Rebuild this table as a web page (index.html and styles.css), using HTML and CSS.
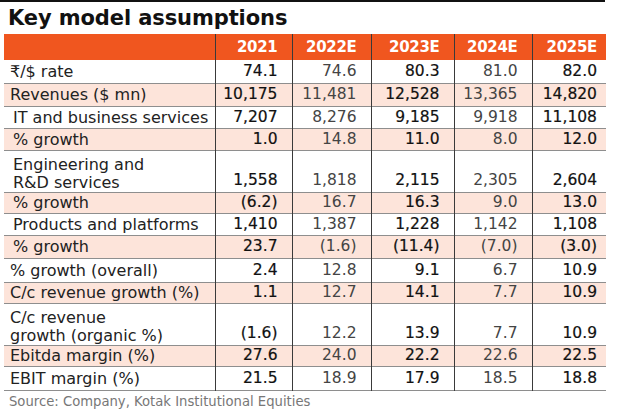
FILE: index.html
```html
<!DOCTYPE html>
<html lang="en">
<head>
<meta charset="utf-8">
<title>Key model assumptions</title>
<link rel="stylesheet" href="styles.css">
</head>
<body>
<div class="page">
  <div class="topline"></div>
  <h1 class="title">Key model assumptions</h1>
  <table class="tbl">
    <colgroup>
      <col class="c-label"><col class="c-2021"><col class="c-2022"><col class="c-2023"><col class="c-2024"><col class="c-2025">
    </colgroup>
    <thead>
      <tr class="head">
        <th class="label"></th><th>2021</th><th>2022E</th><th>2023E</th><th>2024E</th><th class="last">2025E</th>
      </tr>
    </thead>
    <tbody>
      <tr class="r23"><td class="label">₹/$ rate</td><td class="b">74.1</td><td>74.6</td><td class="b">80.3</td><td>81.0</td><td class="b last">82.0</td></tr>
      <tr class="r23"><td class="label">Revenues ($ mn)</td><td class="b">10,175</td><td>11,481</td><td class="b">12,528</td><td>13,365</td><td class="b last">14,820</td></tr>
      <tr class="r22"><td class="label sub">IT and business services</td><td class="b">7,207</td><td>8,276</td><td class="b">9,185</td><td>9,918</td><td class="b last">11,108</td></tr>
      <tr class="r22"><td class="label sub">% growth</td><td class="b">1.0</td><td>14.8</td><td class="b">11.0</td><td>8.0</td><td class="b last">12.0</td></tr>
      <tr class="r42"><td class="label sub">Engineering and<br>R&amp;D services</td><td class="b">1,558</td><td>1,818</td><td class="b">2,115</td><td>2,305</td><td class="b last">2,604</td></tr>
      <tr class="r21"><td class="label sub">% growth</td><td class="b">(6.2)</td><td>16.7</td><td class="b">16.3</td><td>9.0</td><td class="b last">13.0</td></tr>
      <tr class="r22"><td class="label sub">Products and platforms</td><td class="b">1,410</td><td>1,387</td><td class="b">1,228</td><td>1,142</td><td class="b last">1,108</td></tr>
      <tr class="r23"><td class="label sub">% growth</td><td class="b">23.7</td><td>(1.6)</td><td class="b">(11.4)</td><td>(7.0)</td><td class="b last">(3.0)</td></tr>
      <tr class="r24"><td class="label">% growth (overall)</td><td class="b">2.4</td><td>12.8</td><td class="b">9.1</td><td>6.7</td><td class="b last">10.9</td></tr>
      <tr class="r21"><td class="label">C/c revenue growth (%)</td><td class="b">1.1</td><td>12.7</td><td class="b">14.1</td><td>7.7</td><td class="b last">10.9</td></tr>
      <tr class="r42"><td class="label">C/c revenue<br>growth (organic %)</td><td class="b">(1.6)</td><td>12.2</td><td class="b">13.9</td><td>7.7</td><td class="b last">10.9</td></tr>
      <tr class="r21"><td class="label">Ebitda margin (%)</td><td class="b">27.6</td><td>24.0</td><td class="b">22.2</td><td>22.6</td><td class="b last">22.5</td></tr>
      <tr class="r24"><td class="label">EBIT margin (%)</td><td class="b">21.5</td><td>18.9</td><td class="b">17.9</td><td>18.5</td><td class="b last">18.8</td></tr>
    </tbody>
  </table>
  <p class="source">Source: Company, Kotak Institutional Equities</p>
</div>
</body>
</html>
```

FILE: styles.css
```css
* { box-sizing: border-box; }

html, body {
  margin: 0;
  padding: 0;
  background: #ffffff;
}

.page {
  width: 620px;
  height: 413px;
  overflow: hidden;
  font-family: "DejaVu Sans", "Liberation Sans", sans-serif;
  color: #222222;
}

.topline {
  width: 605px;
  height: 2px;
  background: #111111;
}

.title {
  margin: 3px 0 3px 8px;
  font-size: 21px;
  line-height: 26px;
  font-weight: bold;
  color: #111111;
  letter-spacing: -0.1px;
}

.tbl {
  margin-left: 4px;
  width: 602px;
  border-collapse: collapse;
  table-layout: fixed;
  font-size: 15.5px;
}

.c-label { width: 211px; }
.c-2021 { width: 77px; }
.c-2022 { width: 79px; }
.c-2023 { width: 83px; }
.c-2024 { width: 78px; }
.c-2025 { width: 74px; }

.tbl th,
.tbl td {
  padding: 0 14px 0 0;
  text-align: right;
  white-space: nowrap;
  line-height: 19px;
  vertical-align: middle;
  border-left: 1px solid #3a3a3a;
}

.tbl th.label,
.tbl td.label {
  border-left: none;
  text-align: left;
  padding: 0 0 0 6px;
  color: #222222;
  font-size: 16px;
}

.tbl td.sub { padding-left: 9px; }

.tbl th.last,
.tbl td.last { padding-right: 9px; }

.head {
  height: 26px;
  background: #f0561f;
}

.head th {
  color: #ffffff;
  font-weight: bold;
  font-size: 15px;
  letter-spacing: -0.3px;
  padding-top: 1px;
}

.tbl tbody tr { border-top: 1px solid #8e8e8e; }
.tbl tbody tr:first-child { border-top: none; }
.tbl tbody tr:last-child { border-bottom: 1px solid #8e8e8e; }
.tbl tbody tr:nth-child(even) { background: #fde4da; }

.r21 { height: 21px; }
.r22 { height: 22px; }
.r23 { height: 23px; }
.r24 { height: 24px; }
.r42 { height: 42px; }

.r42 td {
  vertical-align: bottom;
  padding-bottom: 2px;
}
.r42 td.label { line-height: 18px; }

.tbl td { color: #444444; }

.tbl td.b {
  color: #111111;
  -webkit-text-stroke: 0.2px #111111;
}

.source {
  margin: 3px 0 0 9px;
  font-size: 13.2px;
  line-height: 16px;
  color: #777777;
}
```
